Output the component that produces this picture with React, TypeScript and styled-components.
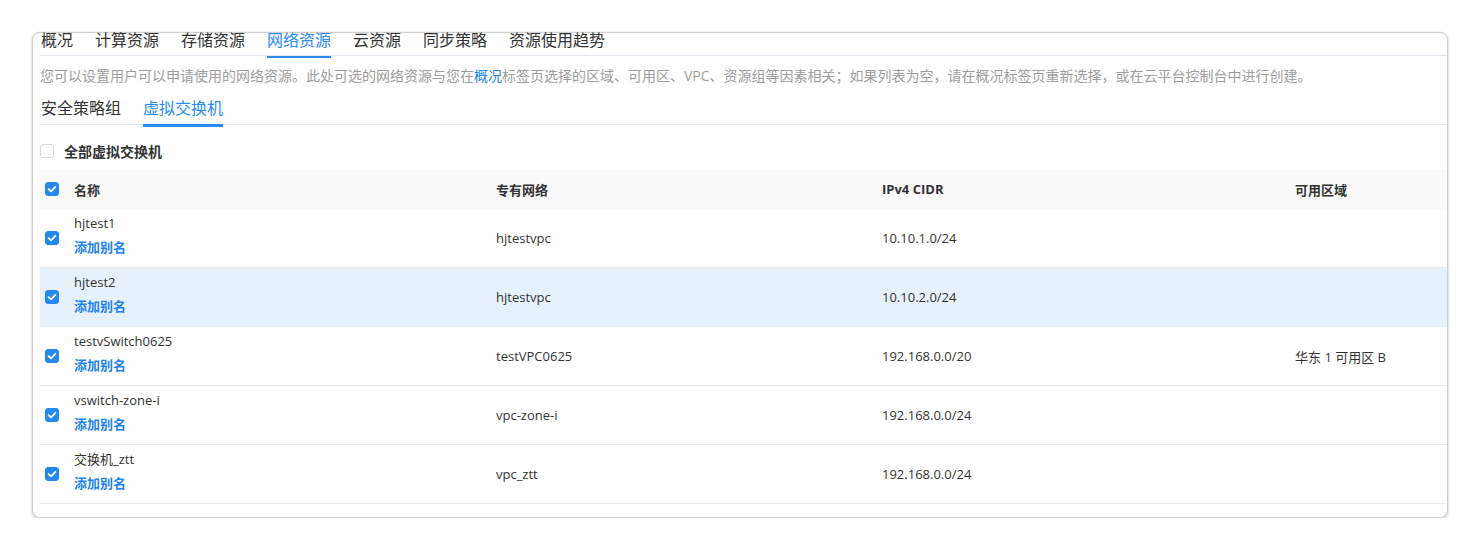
import React from 'react'
import styled, { createGlobalStyle } from 'styled-components'

const GlobalStyle = createGlobalStyle`
  body {
    margin: 0;
    background: #fff;
    font-family: "Open Sans", "Noto Sans CJK SC", sans-serif;
    color: #333;
  }
`

const Page = styled.div`
  padding: 32px 0 0 32px;
  width: 1416px;
`

const Card = styled.div`
  height: 486px;
  box-sizing: border-box;
  border: 1px solid #cfcfcf;
  border-radius: 8px;
  box-shadow: 0 1px 3px rgba(0, 0, 0, 0.25);
  padding-left: 7px;
  background: #fff;
`

const TabBar = styled.div<{ top: number; h: number; indent?: number }>`
  display: flex;
  align-items: flex-start;
  gap: 22px;
  height: ${p => p.h}px;
  margin-top: ${p => p.top}px;
  padding-left: ${p => p.indent || 0}px;
  border-bottom: 1px solid #dfe6ee;
`

const Tab = styled.div<{ active?: boolean; h: number; line: number; lh: number; pad?: number }>`
  height: ${p => p.h}px;
  box-sizing: border-box;
  margin-bottom: -3px;
  padding-top: ${p => p.pad || 0}px;
  font-size: 16px;
  line-height: ${p => p.lh}px;
  border-bottom: ${p => p.line}px solid ${p => (p.active ? '#2a8cf0' : 'transparent')};
  color: ${p => (p.active ? '#2a8cf0' : '#333')};
  white-space: nowrap;
  cursor: pointer;
`

const Hint = styled.div`
  margin-top: 10px;
  font-size: 14px;
  line-height: 20px;
  color: #9d9d9d;
  white-space: nowrap;
`

const HintLink = styled.span`
  color: #2183f0;
`

const AllRow = styled.label`
  display: flex;
  align-items: center;
  gap: 10px;
  margin-top: 16px;
  height: 20px;
  font-size: 14px;
  font-weight: 700;
  color: #333;
`

const Box = styled.span<{ checked?: boolean }>`
  display: inline-flex;
  align-items: center;
  justify-content: center;
  width: 14px;
  height: 14px;
  box-sizing: border-box;
  border-radius: 3px;
  border: 1px solid ${p => (p.checked ? '#2389ee' : '#d9d9d9')};
  background: ${p => (p.checked ? '#2389ee' : '#fff')};
  flex-shrink: 0;
`

const Table = styled.div`
  margin-top: 8px;
`

const cols = '34px 422px 386px 413px 1fr'

const HeadRow = styled.div`
  display: grid;
  grid-template-columns: ${cols};
  height: 40px;
  align-items: center;
  background: #fafafa;
  font-size: 13px;
  font-weight: 700;
  color: #333;
`

const Row = styled.div<{ hi?: boolean }>`
  display: grid;
  grid-template-columns: ${cols};
  height: 58px;
  align-items: center;
  border-bottom: 1px solid ${p => (p.hi ? '#e6f1fc' : '#e9e9e9')};
  background: ${p => (p.hi ? '#e6f1fc' : '#fff')};
  font-size: 13px;
  color: #333;
`

const CheckCell = styled.div`
  padding-left: 5px;
  display: flex;
  align-items: center;
`

const NameCell = styled.div`
  align-self: start;
  padding-top: 4px;
  display: flex;
  flex-direction: column;
  gap: 4px;
`

const NameText = styled.span`
  line-height: 20px;
`

const Alias = styled.span`
  line-height: 20px;
  font-weight: 700;
  color: #2183f0;
  cursor: pointer;
`

const Check = ({ checked }: { checked?: boolean }) => (
  <Box checked={checked}>
    {checked && (
      <svg width="10" height="10" viewBox="0 0 10 10">
        <path d="M1.6 5.1 L4 7.4 L8.4 2.8" fill="none" stroke="#fff" strokeWidth="1.8" strokeLinecap="round" strokeLinejoin="round" />
      </svg>
    )}
  </Box>
)

const tabs = ['概况', '计算资源', '存储资源', '网络资源', '云资源', '同步策略', '资源使用趋势']

const rows = [
  { name: 'hjtest1', vpc: 'hjtestvpc', cidr: '10.10.1.0/24', zone: '' },
  { name: 'hjtest2', vpc: 'hjtestvpc', cidr: '10.10.2.0/24', zone: '', hi: true },
  { name: 'testvSwitch0625', vpc: 'testVPC0625', cidr: '192.168.0.0/20', zone: '华东 1 可用区 B' },
  { name: 'vswitch-zone-i', vpc: 'vpc-zone-i', cidr: '192.168.0.0/24', zone: '' },
  { name: '交换机_ztt', vpc: 'vpc_ztt', cidr: '192.168.0.0/24', zone: '' },
]

export default function App() {
  return (
    <Page>
      <GlobalStyle />
      <Card>
        <TabBar top={-3} h={25} indent={1}>
          {tabs.map(t => (
            <Tab key={t} h={28} line={2} lh={20} active={t === '网络资源'}>
              {t}
            </Tab>
          ))}
        </TabBar>
        <Hint>
          您可以设置用户可以申请使用的网络资源。此处可选的网络资源与您在<HintLink>概况</HintLink>
          标签页选择的区域、可用区、VPC、资源组等因素相关；如果列表为空，请在概况标签页重新选择，或在云平台控制台中进行创建。
        </Hint>
        <TabBar top={11} h={27} indent={1}>
          <Tab h={30} line={3} lh={22}>
            安全策略组
          </Tab>
          <Tab h={30} line={3} lh={22} active>
            虚拟交换机
          </Tab>
        </TabBar>
        <AllRow>
          <Check />
          全部虚拟交换机
        </AllRow>
        <Table>
          <HeadRow>
            <CheckCell>
              <Check checked />
            </CheckCell>
            <div>名称</div>
            <div>专有网络</div>
            <div>IPv4 CIDR</div>
            <div>可用区域</div>
          </HeadRow>
          {rows.map(r => (
            <Row key={r.name} hi={r.hi}>
              <CheckCell>
                <Check checked />
              </CheckCell>
              <NameCell>
                <NameText>{r.name}</NameText>
                <Alias>添加别名</Alias>
              </NameCell>
              <div>{r.vpc}</div>
              <div>{r.cidr}</div>
              <div>{r.zone}</div>
            </Row>
          ))}
        </Table>
      </Card>
    </Page>
  )
}
